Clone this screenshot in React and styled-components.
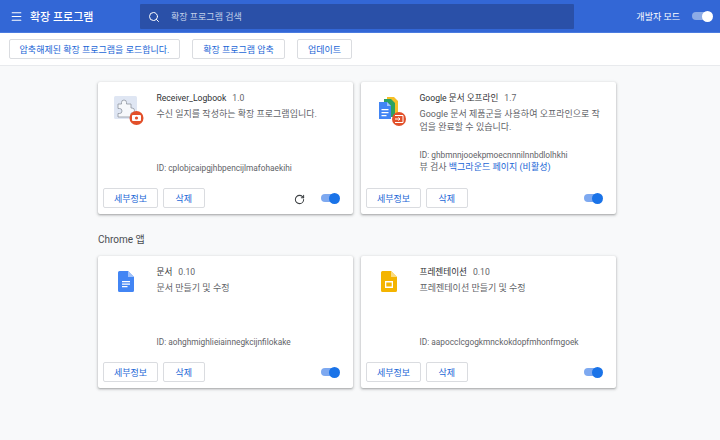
import React from "react";
import styled, { createGlobalStyle } from "styled-components";
import { Menu, Search, RotateCw } from "lucide-react";

const GlobalStyle = createGlobalStyle`
  html, body {
    margin: 0;
    height: 100%;
    background: #f8f9fa;
    font-family: Roboto, "Noto Sans CJK KR", sans-serif;
    font-size: 9px;
    color: #5f6368;
  }
`;

const Page = styled.div`
  width: 720px;
  height: 440px;
  overflow: hidden;
`;

const Header = styled.header`
  height: 32px;
  background: #3367d6;
  border-bottom: 1px solid #4a7be0;
  display: flex;
  align-items: center;
  color: #fff;
`;

const Brand = styled.div`
  width: 140px;
  padding-left: 10px;
  box-sizing: border-box;
  display: flex;
  align-items: center;
  gap: 7px;
  font-size: 11px;
  font-weight: 500;
`;

const SearchBox = styled.div`
  width: 434px;
  height: 25px;
  margin-top: 1px;
  background: #2a50a8;
  border-radius: 1px;
  display: flex;
  align-items: center;
  gap: 11px;
  padding-left: 8px;
  box-sizing: border-box;
  font-size: 9px;
  color: #c3d0ea;
`;

const DevMode = styled.div`
  margin-left: auto;
  padding-right: 8px;
  display: flex;
  align-items: center;
  gap: 12px;
  font-size: 9px;
`;

const Toolbar = styled.div`
  height: 32px;
  background: #fff;
  border-bottom: 1px solid #e8eaed;
  display: flex;
  align-items: center;
  gap: 12px;
  padding: 0 0 0 9px;
`;

const OutlineButton = styled.button`
  height: 20px;
  width: ${(p) => p.$w}px;
  padding: 0;
  background: #fff;
  border: 1px solid #dadce0;
  border-radius: 2px;
  color: #1a66d6;
  font-family: inherit;
  font-size: 9px;
  font-weight: 400;
`;

const Main = styled.main`
  padding: 16px 0 0 98px;
`;

const CardGrid = styled.div`
  display: grid;
  grid-template-columns: 255px 255px;
  column-gap: 8px;
`;

const SectionTitle = styled.h2`
  margin: 19px 0 9px;
  height: 14px;
  line-height: 14px;
  font-size: 10px;
  font-weight: 400;
  color: #4a4d51;
`;

const Card = styled.section`
  height: 132px;
  background: #fff;
  border-radius: 2px;
  box-shadow: 0 1px 2px rgba(60, 64, 67, 0.35), 0 1px 3px 1px rgba(60, 64, 67, 0.12);
  display: flex;
  flex-direction: column;
`;

const CardBody = styled.div`
  flex: 1;
  display: flex;
  min-height: 0;
`;

const IconSlot = styled.div`
  width: 58.5px;
  flex: none;
  padding: ${(p) => p.$top}px 0 0 ${(p) => p.$left}px;
  box-sizing: border-box;
`;

const Info = styled.div`
  flex: 1;
  display: flex;
  flex-direction: column;
  padding: 9px 16px 13.5px 0;
  line-height: 13px;
`;

const NameRow = styled.div`
  display: flex;
  gap: 6px;
  height: 14px;
  align-items: center;
`;

const Name = styled.span`
  color: #2f3134;
  font-size: 8.6px;
`;

const Version = styled.span`
  font-size: 8.6px;
`;

const Description = styled.p`
  margin: 3px 0 0;
  font-size: 9px;
  line-height: 12.5px;
`;

const IdLine = styled.div`
  margin-top: auto;
  font-size: 8.3px;
  line-height: 12.5px;
`;

const Inspect = styled.div`
  margin-bottom: 1px;
  font-size: 9px;
  line-height: 12.5px;
  span {
    color: #1a66d6;
  }
`;

const CardFoot = styled.div`
  height: 26px;
  flex: none;
  display: flex;
  align-items: flex-start;
  gap: 4.5px;
  padding: 0 14px 0 5px;
`;

const Spacer = styled.div`
  flex: 1;
`;

const Reload = styled.div`
  margin: 4px 11px 0 0;
  height: 14px;
  display: flex;
  align-items: center;
  color: #3c4043;
`;

const Track = styled.div`
  position: relative;
  width: ${(p) => (p.$light ? 20 : 18.5)}px;
  height: 8px;
  border-radius: 4px;
  background: ${(p) => (p.$light ? "#8cabe6" : "#7ea9f0")};
`;

const Knob = styled.div`
  position: absolute;
  right: -1px;
  top: -1.5px;
  width: 11px;
  height: 11px;
  border-radius: 50%;
  background: ${(p) => (p.$light ? "#fff" : "#1a73e8")};
`;

const ToggleWrap = styled.div`
  margin-top: ${(p) => (p.$light ? 0 : 6)}px;
`;

const Toggle = ({ light }) => (
  <ToggleWrap $light={light}>
    <Track $light={light}>
      <Knob $light={light} />
    </Track>
  </ToggleWrap>
);

const Puzzle = () => (
  <svg width="32" height="30" viewBox="0 0 32 30">
    <rect x="1" y="0" width="23" height="23" rx="1.5" fill="#dfe6f3" />
    <path
      d="M5 8h3.500V6.500a2.500 2.500 0 0 1 5 0V8H18v4h1a2.500 2.500 0 0 1 0 5h-1v4H5v-3.500h1.500a2.500 2.500 0 0 0 0-5H5z"
      fill="#f6f8fb"
      stroke="#8f969f"
      strokeWidth="0.8"
    />
    <circle cx="23.500" cy="22" r="7" fill="#e2502a" />
    <rect x="19" y="19" width="9" height="6" rx="1" fill="#fff" />
    <circle cx="23.500" cy="22" r="1.600" fill="#e2502a" />
  </svg>
);

const DocsStack = () => (
  <svg width="30" height="30" viewBox="0 0 30 30">
    <path d="M9 1h7l4 4v13H9z" fill="#f6bf26" />
    <path d="M6 3h7l4 4v14H6z" fill="#2da160" />
    <path d="M1 6h8l4 4v13H1z" fill="#4285f4" />
    <path d="M9 6l4 4H9z" fill="#a1c2fa" />
    <path d="M3.500 13h7v1.200h-7zM3.500 16h7v1.200h-7zM3.500 19h5v1.200h-5z" fill="#fff" />
    <circle cx="21" cy="23" r="7" fill="#e2502a" />
    <path d="M17 19.500h8v7h-8M17 23h5m-1.500-1.600L22 23l-1.500 1.600" fill="none" stroke="#fff" strokeWidth="1" />
  </svg>
);

const DocsIcon = () => (
  <svg width="16" height="21" viewBox="0 0 16 21">
    <path d="M1.500 0H10l6 6v13.500a1.500 1.500 0 0 1-1.500 1.500h-13A1.500 1.500 0 0 1 0 19.500v-18A1.500 1.500 0 0 1 1.500 0z" fill="#4285f4" />
    <path d="M10 0l6 6h-6z" fill="#a1c2fa" />
    <path d="M4 10h8v1.200H4zM4 12.500h8v1.200H4zM4 15h5.500v1.200H4z" fill="#fff" />
  </svg>
);

const SlidesIcon = () => (
  <svg width="16" height="21" viewBox="0 0 16 21">
    <path d="M1.500 0H10l6 6v13.500a1.500 1.500 0 0 1-1.500 1.500h-13A1.500 1.500 0 0 1 0 19.500v-18A1.500 1.500 0 0 1 1.500 0z" fill="#f4b400" />
    <path d="M10 0l6 6h-6z" fill="#fadb80" />
    <path d="M4 10h8v7H4z" fill="#fff" />
    <path d="M5.300 11.500h5.400v4H5.300z" fill="#f4b400" />
  </svg>
);

const ExtensionCard = ({ icon, iconLeft, iconTop, name, version, desc, id, inspect, reload }) => (
  <Card>
    <CardBody>
      <IconSlot $left={iconLeft} $top={iconTop}>{icon}</IconSlot>
      <Info>
        <NameRow>
          <Name>{name}</Name>
          <Version>{version}</Version>
        </NameRow>
        <Description>{desc}</Description>
        <IdLine>ID: {id}</IdLine>
        {inspect && (
          <Inspect>
            뷰 검사 <span>백그라운드 페이지 (비활성)</span>
          </Inspect>
        )}
      </Info>
    </CardBody>
    <CardFoot>
      <OutlineButton $w={55}>세부정보</OutlineButton>
      <OutlineButton $w={42.5}>삭제</OutlineButton>
      <Spacer />
      {reload && (
        <Reload>
          <RotateCw size={11} strokeWidth={2.2} />
        </Reload>
      )}
      <Toggle />
    </CardFoot>
  </Card>
);

export default function App() {
  return (
    <Page>
      <GlobalStyle />
      <Header>
        <Brand>
          <Menu size={13} strokeWidth={2} />
          확장 프로그램
        </Brand>
        <SearchBox>
          <Search size={12} strokeWidth={2} color="#fff" />
          확장 프로그램 검색
        </SearchBox>
        <DevMode>
          개발자 모드
          <Toggle light />
        </DevMode>
      </Header>
      <Toolbar>
        <OutlineButton $w={171}>압축해제된 확장 프로그램을 로드합니다.</OutlineButton>
        <OutlineButton $w={93}>확장 프로그램 압축</OutlineButton>
        <OutlineButton $w={55}>업데이트</OutlineButton>
      </Toolbar>
      <Main>
        <CardGrid>
          <ExtensionCard
            icon={<Puzzle />}
            iconLeft={15}
            iconTop={14}
            name="Receiver_Logbook"
            version="1.0"
            desc="수신 일지를 작성하는 확장 프로그램입니다."
            id="cplobjcaipgjhbpencijlmafohaekihi"
            reload
          />
          <ExtensionCard
            icon={<DocsStack />}
            iconLeft={17}
            iconTop={14}
            name="Google 문서 오프라인"
            version="1.7"
            desc="Google 문서 제품군을 사용하여 오프라인으로 작업을 완료할 수 있습니다."
            id="ghbmnnjooekpmoecnnnilnnbdlolhkhi"
            inspect
          />
        </CardGrid>
        <SectionTitle>Chrome 앱</SectionTitle>
        <CardGrid>
          <ExtensionCard
            icon={<DocsIcon />}
            iconLeft={20}
            iconTop={15}
            name="문서"
            version="0.10"
            desc="문서 만들기 및 수정"
            id="aohghmighlieiainnegkcijnfilokake"
          />
          <ExtensionCard
            icon={<SlidesIcon />}
            iconLeft={20}
            iconTop={15}
            name="프레젠테이션"
            version="0.10"
            desc="프레젠테이션 만들기 및 수정"
            id="aapocclcgogkmnckokdopfmhonfmgoek"
          />
        </CardGrid>
      </Main>
    </Page>
  );
}
